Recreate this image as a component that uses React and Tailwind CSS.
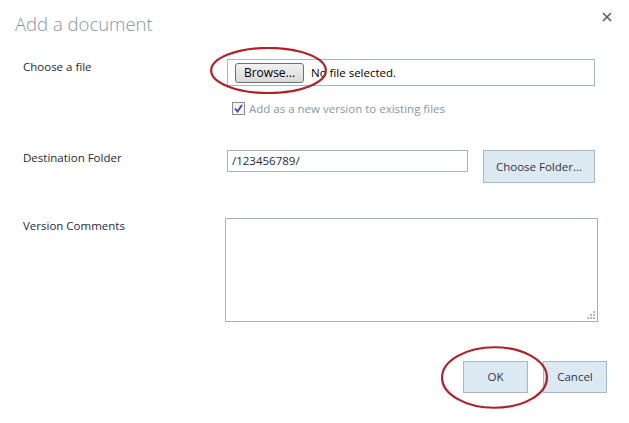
import React from "react";

function Ellipse({ className }) {
  return (
    <svg className={className} viewBox="0 0 100 100" preserveAspectRatio="none">
      <ellipse cx="50" cy="50" rx="49" ry="48" fill="none" stroke="#b0212b" strokeWidth="2.2" vectorEffect="non-scaling-stroke" />
    </svg>
  );
}

export default function App() {
  return (
    <div className="relative w-[629px] h-[423px] bg-white text-[11.5px] text-[#1e2a38] font-['Segoe_UI','Open_Sans',sans-serif] overflow-hidden">
      {/* header */}
      <div className="flex items-start justify-between h-[59px] pl-[15px] pr-[17px] pt-[10px]">
        <h1 className="text-[18.5px] font-light text-[#7f98ab] leading-[28px]">Add a document</h1>
        <svg className="mt-[2px]" width="10" height="10" viewBox="0 0 10 10">
          <path d="M1 1 L9 9 M9 1 L1 9" stroke="#5a5a5a" strokeWidth="1.6" />
        </svg>
      </div>

      {/* choose a file */}
      <div className="flex items-start">
        <div className="w-[227px] pl-[23px] leading-[16px]">Choose a file</div>
        <div className="w-[368px] h-[27px] border border-[#a4b6c3] flex items-center pl-[7px]">
          <button className="w-[69px] h-[20px] rounded-[3px] border border-[#707070] bg-gradient-to-b from-[#f2f2f2] to-[#d9d9d9] text-black text-[12px] leading-none">
            Browse...
          </button>
          <span className="ml-[7px] text-black">No file selected.</span>
        </div>
      </div>
      <div className="flex items-center pl-[232px] mt-[16px] h-[13px]">
        <span className="w-[13px] h-[13px] border border-[#8d8d8d] bg-[#f4f4f4] flex items-center justify-center">
          <svg width="9" height="9" viewBox="0 0 9 9">
            <path d="M1 4.5 L3.5 7.5 L8 1" fill="none" stroke="#3c4a9c" strokeWidth="1.8" />
          </svg>
        </span>
        <span className="ml-[4px] text-[#8797a4]">Add as a new version to existing files</span>
      </div>

      {/* destination */}
      <div className="flex items-start mt-[35px]">
        <div className="w-[227px] pl-[23px] leading-[16px]">Destination Folder</div>
        <div className="w-[241px] h-[22px] border border-[#a4b6c3] flex items-center pl-[4px] text-[#1e2a38]">/123456789/</div>
        <button className="ml-[15px] w-[112px] h-[33px] border border-[#a2b9c9] bg-[#dce9f3] text-[#2a3848]">
          Choose Folder...
        </button>
      </div>

      {/* version comments */}
      <div className="flex items-start mt-[35px]">
        <div className="w-[225px] pl-[23px] leading-[16px]">Version Comments</div>
        <div className="relative w-[373px] h-[104px] border border-[#9fb2c0]">
          <svg className="absolute right-[1px] bottom-[1px]" width="10" height="10" viewBox="0 0 10 10">
            <rect x="7" y="1" width="2" height="2" fill="#b8b8b8" />
            <rect x="4" y="4" width="2" height="2" fill="#b8b8b8" />
            <rect x="7" y="4" width="2" height="2" fill="#b8b8b8" />
            <rect x="1" y="7" width="2" height="2" fill="#b8b8b8" />
            <rect x="4" y="7" width="2" height="2" fill="#b8b8b8" />
            <rect x="7" y="7" width="2" height="2" fill="#b8b8b8" />
          </svg>
        </div>
      </div>

      {/* buttons */}
      <div className="flex justify-end pr-[22px] mt-[39px] gap-[15px]">
        <button className="w-[65px] h-[32px] border border-[#a2b9c9] bg-[#dce9f3] text-[#2a3848]">OK</button>
        <button className="w-[64px] h-[32px] border border-[#a2b9c9] bg-[#dce9f3] text-[#2a3848]">Cancel</button>
      </div>

      {/* red annotation circles */}
      <Ellipse className="absolute left-[210px] top-[47px] w-[117px] h-[47px]" />
      <Ellipse className="absolute left-[441px] top-[346px] w-[107px] h-[63px]" />
    </div>
  );
}
